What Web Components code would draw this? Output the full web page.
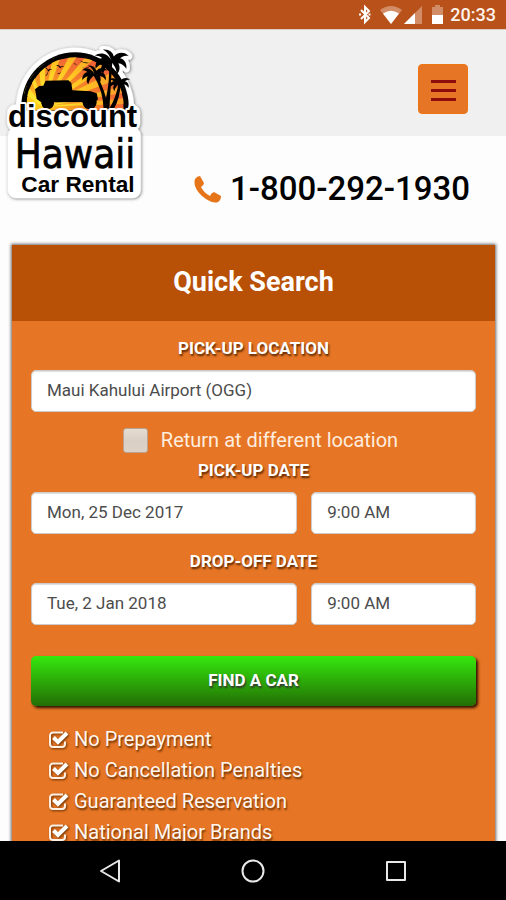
<!DOCTYPE html>
<html lang="en">
<head>
<meta charset="utf-8">
<meta name="viewport" content="width=device-width, initial-scale=1">
<title>Discount Hawaii Car Rental</title>
<style>
  body { margin: 0; font-family: Roboto, "Liberation Sans", sans-serif; background: #fdfdfd; }
</style>
</head>
<body>
<rental-app></rental-app>

<template id="t-app">
  <style>
    :host { display: flex; flex-direction: column; height: 100vh; overflow: hidden; }
    main { flex: 1; min-height: 0; overflow: hidden; }
    quick-search { margin: 35px 11px 0 12px; }
  </style>
  <status-bar></status-bar>
  <main>
    <site-header></site-header>
    <phone-line></phone-line>
    <quick-search>
      <span slot="title">Quick Search</span>
      <benefit-item>No Prepayment</benefit-item>
      <benefit-item>No Cancellation Penalties</benefit-item>
      <benefit-item>Guaranteed Reservation</benefit-item>
      <benefit-item>National Major Brands</benefit-item>
    </quick-search>
  </main>
  <nav-bar></nav-bar>
</template>

<template id="t-status">
  <style>
    :host { display: flex; flex: none; justify-content: flex-end; align-items: center; height: 29px; padding-right: 10px; background: #b8511a; border-bottom: 1px solid #dccac2; color: #fff5ee; }
    svg { display: block; }
    time { font-size: 18px; font-weight: 500; line-height: 31px; }
  </style>
  <svg width="92" height="29" viewBox="0 0 92 29" aria-hidden="true">
    <path d="M3 10l8 8-4 4V7l4 4-8 8" fill="none" stroke="#fff" stroke-width="2"/>
    <path d="M1 14.500h2M10.500 14.500h2" stroke="#fff" stroke-width="2"/>
    <path d="M22 10Q33 2 44 10L33 24z" fill="#d28c66"/>
    <path d="M25 13.500Q33 8 41 13.500L33 24z" fill="#fff"/>
    <path d="M64 6v18H46z" fill="#d28c66"/>
    <path d="M57 13v11H46z" fill="#fff"/>
    <path d="M74 7h3V5h5v2h3v8H74z" fill="#d28c66"/>
    <path d="M74 15h11v9H74z" fill="#fff"/>
  </svg>
  <time>20:33</time>
</template>

<template id="t-header">
  <style>
    :host { display: flex; position: relative; justify-content: flex-end; align-items: flex-start; height: 106px; padding: 34px 38px 0 0; box-sizing: border-box; background: #f0f0f0; }
    a { position: absolute; left: 0; top: 10px; }
    button { display: flex; flex-direction: column; justify-content: center; align-items: center; gap: 6px; width: 50px; height: 50px; padding: 2px 0 0; border: 1px solid #ee7512; border-radius: 4px; background: #e67625; }
    i { display: block; width: 25px; height: 3px; background: #8e0b0d; }
  </style>
  <a href="#home" aria-label="Discount Hawaii Car Rental"><brand-logo></brand-logo></a>
  <button type="button" aria-label="Menu"><i></i><i></i><i></i></button>
</template>

<template id="t-logo">
  <style>
    :host { display: block; }
    svg { display: block; overflow: visible; }
    .bold { font-family: "Liberation Sans", Arial, sans-serif; font-weight: 700; }
    .tall { font-family: "DejaVu Sans Condensed", "DejaVu Sans", sans-serif; }
  </style>
  <svg width="150" height="165" viewBox="0 0 450 495">
    <defs>
      <clipPath id="sun"><path d="M68 212V198a157 157 0 0 1 314 0v14z"/></clipPath>
      <radialGradient id="sky" cx=".1" cy=".85" r="1"><stop offset="0" stop-color="#ffd51f"/><stop offset=".35" stop-color="#f99f22"/><stop offset=".7" stop-color="#f2742d"/><stop offset="1" stop-color="#ee5f37"/></radialGradient>
      <radialGradient id="ray" gradientUnits="userSpaceOnUse" cx="130" cy="200" r="240"><stop offset="0" stop-color="#fff338"/><stop offset=".55" stop-color="#ffc421"/><stop offset="1" stop-color="#f89a2c"/></radialGradient>
      <filter id="sh" x="-10%" y="-10%" width="120%" height="120%"><feDropShadow dx="2" dy="2" stdDeviation="5" flood-color="#333" flood-opacity=".7"/></filter>
      <g id="crown">
        <path d="M0 4C-10-17-33-23-48-10-37-12-32-7-27-4-41-1-48 12-46 26-39 18-33 14-26 13-32 23-31 34-24 42-21 25-11 14 0 8 7 18 15 26 14 43 25 33 24 20 19 11 29 12 36 18 42 27 44 12 37 0 24-3 31-9 39-12 49-9 38-23 16-22 6-8 4-20-8-30-25-28-12-21-7-12 0 4z"/>
      </g>
    </defs>
    <g fill="#fff" stroke="#fff" filter="url(#sh)">
      <path d="M48 204a177 181 0 0 1 354 0z"/>
      <rect x="22" y="194" width="398" height="80" rx="24"/>
      <rect x="24" y="262" width="398" height="212" rx="24"/>
      <use href="#crown" transform="translate(335 58) scale(1.050)" stroke-width="20" stroke-linejoin="round"/>
    </g>
    <path d="M64 212V198a161 161 0 0 1 322 0v14z"/>
    <g clip-path="url(#sun)">
      <path d="M79 212V198a146 146 0 0 1 292 0v14z" fill="url(#sky)"/>
      <path fill="url(#ray)" d="M130 200L70 160 80 135zM130 200L88 112 100 98zM130 200L116 80 137 70zM130 200L158 55 182 50zM130 200L208 48 232 48zM130 200L258 50 278 60zM130 200L300 70 320 85zM130 200L330 100 350 120zM130 200L360 140 370 158zM130 200L373 175 375 192z"/>
      <path d="M64 212V198a161 161 0 0 1 322 0v14" fill="none" stroke="#000" stroke-width="30"/>
    </g>
    <path d="M105 148l13-10 12-1 7-15 68-1 9 8 3 22 55 3 18 6 4 18-5 4a22 22 0 0 1-42 4l-85 1a19 19 0 0 1-38 0l-14-10-2-14z"/>
    <circle cx="143" cy="190" r="18"/><circle cx="269" cy="187" r="21"/>
    <path d="M134 82q8 0 10 8 6-6 13-2-8 0-12 7-3-8-11-13zM168 76q9-3 13 4 6-4 13-1-9 0-14 6-3-7-12-9zM238 61q12 8 30 7-18 6-30-7zM245 82q12 6 26-5-12 16-26 5zM135 108q8-6 9-14 1 12-9 14zM170 100q9 1 13-5-4 10-13 5zM222 69l10 5-8-1z"/>
    <path d="M280 105q30 48 31 104h17q4-70 9-145h-10q3 60-9 110-11-42-31-73zM326 209q25-40 30-84l6 1q-1 50-22 83z"/>
    <use href="#crown" transform="translate(335 58) scale(1.050)"/>
    <use href="#crown" transform="translate(284 99) scale(.8)"/>
    <use href="#crown" transform="translate(359 126) scale(.65)"/>
    <text class="bold" x="24" y="262" font-size="93" stroke="#fff" stroke-width="12" stroke-linejoin="round" paint-order="stroke">discount</text>
    <text class="tall" x="44" y="384" font-size="120" stroke="#000" stroke-width="2">Hawaii</text>
    <text class="bold" x="64" y="456" font-size="68">Car Rental</text>
  </svg>
</template>

<template id="t-phone">
  <style>
    :host { display: flex; justify-content: flex-end; padding: 32px 36px 0 0; }
    a { display: flex; align-items: center; gap: 9px; color: #000; font-size: 33px; font-weight: 500; line-height: 42px; text-decoration: none; }
    svg { display: block; }
  </style>
  <a href="tel:18002921930">
    <svg width="27" height="27" viewBox="0 0 27 27" aria-hidden="true"><path fill="#e67519" d="M1 3Q3 0 6 0L10 7Q10 9 7 11Q10 17 16 20Q17 17 20 16L27 20Q27 24 24 26Q20 28 12 23Q4 18 1 10Q0 6 1 3z"/></svg>
    <span>1-800-292-1930</span>
  </a>
</template>

<template id="t-search">
  <style>
    :host { display: block; background: #e67625; box-shadow: 0 0 3px 1px #666; }
    h2 { margin: 0; background: #b85006; color: #fff; font-size: 27px; font-weight: 700; line-height: 74px; padding-bottom: 2px; text-align: center; }
    form { padding: 15px 19px 0; }
    form-field + form-field { margin-top: 15px; }
    .return { display: flex; justify-content: center; align-items: center; gap: 13px; height: 32px; margin: 12px 0 2px; padding-left: 14px; color: #ffeddf; font-size: 20px; }
    .return input { appearance: none; width: 25px; height: 25px; margin: 0; border: 1px solid #b8a392; border-radius: 3px; background: linear-gradient(#e5dcd2, #d9cfc5 50%, #dcd2c8); }
    button { display: block; width: 100%; height: 50px; margin-top: 31px; padding: 0 0 2px; border: 0; border-radius: 5px; background: linear-gradient(#35e80d, #236d05); box-shadow: 2px 2px 3px #2a1000; color: #fff; font: 700 17px Roboto, sans-serif; text-shadow: 1px 2px 2px #333; }
    ul { margin: 18px 0 0; padding: 0 0 20px 18px; }
  </style>
  <h2><slot name="title"></slot></h2>
  <form>
    <form-field label="PICK-UP LOCATION" value="Maui Kahului Airport (OGG)"></form-field>
    <label class="return"><input type="checkbox"><span>Return at different location</span></label>
    <form-field label="PICK-UP DATE" value="Mon, 25 Dec 2017" time="9:00 AM"></form-field>
    <form-field label="DROP-OFF DATE" value="Tue, 2 Jan 2018" time="9:00 AM"></form-field>
    <button type="button">FIND A CAR</button>
    <ul role="list"><slot></slot></ul>
  </form>
</template>

<template id="t-field">
  <style>
    :host { display: block; }
    label { display: block; margin-bottom: 10px; color: #fff; font-size: 17px; font-weight: 700; line-height: 24px; text-align: center; text-shadow: 1px 2px 2px #5a2600; }
    .row { display: grid; grid-template-columns: 1fr; gap: 14px; }
    .row.timed { grid-template-columns: 21fr 13fr; }
    input, select { appearance: none; box-sizing: border-box; width: 100%; min-width: 0; height: 42px; margin: 0; padding: 0 15px 2px; border: 1px solid #ccc; border-radius: 5px; background: #fff; box-shadow: inset 0 1px 1px #ddd; color: #4c4c4c; font: 400 17px Roboto, sans-serif; }
  </style>
  <label for="main"></label>
  <div class="row"><input id="main" type="text"></div>
</template>

<template id="t-benefit">
  <style>
    :host { display: flex; align-items: center; gap: 5px; height: 31px; color: #fff7f0; font-size: 20px; line-height: 31px; text-shadow: 1px 2px 2px #6a3000; }
    svg { display: block; filter: drop-shadow(1px 1px 1px #6a3000); }
  </style>
  <svg width="20" height="18" viewBox="0 0 20 18" aria-hidden="true"><path d="M14 1.500H4A3 3 0 0 0 1 4.500V13a3 3 0 0 0 3 3h9a3 3 0 0 0 3-3v-2.500" fill="none" stroke="#fff0e6" stroke-width="2"/><path d="M4.500 6.500L9 11l9-9" fill="none" stroke="#fff" stroke-width="4"/></svg>
  <span><slot></slot></span>
</template>

<template id="t-nav">
  <style>
    :host { display: flex; flex: none; justify-content: center; height: 59px; background: #000; }
    div { display: grid; grid-template-columns: repeat(3, 1fr); width: 85%; }
    button { display: flex; justify-content: center; align-items: center; padding: 0; border: 0; background: none; }
  </style>
  <div>
    <button type="button" aria-label="Back"><svg width="24" height="24" viewBox="0 0 24 24"><path d="M21 1.500v21L3 12z" fill="none" stroke="#e8e8e8" stroke-width="2" stroke-linejoin="round"/></svg></button>
    <button type="button" aria-label="Home"><svg width="24" height="24" viewBox="0 0 24 24"><circle cx="12" cy="12" r="10.500" fill="none" stroke="#e8e8e8" stroke-width="2"/></svg></button>
    <button type="button" aria-label="Recent apps"><svg width="24" height="24" viewBox="0 0 24 24"><rect x="3" y="3" width="18" height="18" fill="none" stroke="#e8e8e8" stroke-width="2" stroke-linejoin="round"/></svg></button>
  </div>
</template>

<script>
  class Base extends HTMLElement {
    constructor() {
      super();
      this.attachShadow({ mode: "open" }).append(
        document.getElementById(this.constructor.template).content.cloneNode(true));
    }
  }
  const define = (name, template) =>
    customElements.define(name, class extends Base { static template = template; });

  class FormField extends Base {
    static template = "t-field";
    connectedCallback() {
      const root = this.shadowRoot;
      root.querySelector("label").textContent = this.getAttribute("label");
      root.querySelector("input").value = this.getAttribute("value");
      const time = this.getAttribute("time");
      if (time && !root.querySelector("select")) {
        const row = root.querySelector(".row");
        row.classList.add("timed");
        const select = document.createElement("select");
        select.setAttribute("aria-label", this.getAttribute("label") + " time");
        select.add(new Option(time));
        row.append(select);
      }
    }
  }
  class BenefitItem extends Base {
    static template = "t-benefit";
    connectedCallback() { this.setAttribute("role", "listitem"); }
  }

  customElements.define("form-field", FormField);
  customElements.define("benefit-item", BenefitItem);
  define("brand-logo", "t-logo");
  define("status-bar", "t-status");
  define("site-header", "t-header");
  define("phone-line", "t-phone");
  define("quick-search", "t-search");
  define("nav-bar", "t-nav");
  define("rental-app", "t-app");
</script>
</body>
</html>
